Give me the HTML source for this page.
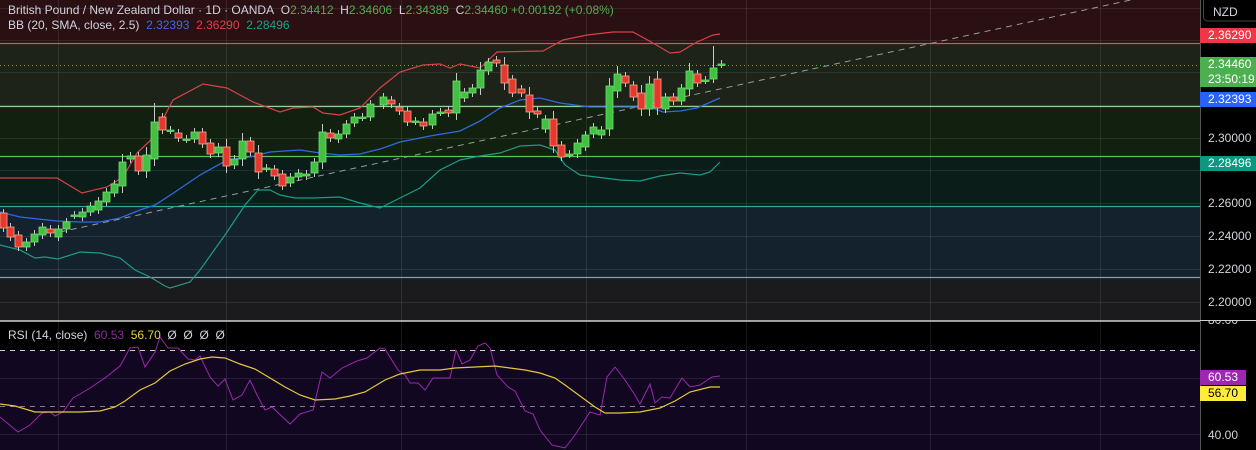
<!DOCTYPE html>
<html><head><meta charset="utf-8"><style>
html,body{margin:0;padding:0;background:#000;width:1256px;height:450px;overflow:hidden;font-family:"Liberation Sans",sans-serif}
.t{position:absolute;font-size:12px;color:#d1d4dc;white-space:nowrap}
.lb{position:absolute;left:1200px;width:56px;font-size:12px;color:#fff;padding-left:8px;box-sizing:border-box;line-height:15px}
</style></head><body>
<svg id="s" width="1256" height="450" style="position:absolute;left:0;top:0">
<rect x="0" y="0" width="1200" height="43" fill="#2a0f13"/>
<rect x="0" y="43" width="1200" height="64" fill="#1d2318"/>
<rect x="0" y="107" width="1200" height="49" fill="#122010"/>
<rect x="0" y="156" width="1200" height="50" fill="#0a1d19"/>
<rect x="0" y="206" width="1200" height="71" fill="#14222e"/>
<rect x="0" y="277" width="1200" height="44" fill="#1b1b1d"/>
<rect x="0" y="321" width="1200" height="29" fill="#000"/>
<rect x="0" y="350" width="1200" height="100" fill="#110720"/>
<g stroke="#ffffff" stroke-opacity="0.09" stroke-width="1">
<line x1="0" x2="1200" y1="8.5" y2="8.5"/><line x1="0" x2="1200" y1="40.5" y2="40.5"/><line x1="0" x2="1200" y1="72.5" y2="72.5"/><line x1="0" x2="1200" y1="105.5" y2="105.5"/><line x1="0" x2="1200" y1="138.5" y2="138.5"/><line x1="0" x2="1200" y1="170.5" y2="170.5"/><line x1="0" x2="1200" y1="203.5" y2="203.5"/><line x1="0" x2="1200" y1="236.5" y2="236.5"/><line x1="0" x2="1200" y1="269.5" y2="269.5"/><line x1="0" x2="1200" y1="302.5" y2="302.5"/>
<line x1="0" x2="1200" y1="378.5" y2="378.5"/><line x1="0" x2="1200" y1="434.5" y2="434.5"/>
<line x1="58.5" x2="58.5" y1="0" y2="450"/><line x1="226.5" x2="226.5" y1="0" y2="450"/><line x1="401.5" x2="401.5" y1="0" y2="450"/><line x1="586.5" x2="586.5" y1="0" y2="450"/><line x1="746.5" x2="746.5" y1="0" y2="450"/><line x1="930.5" x2="930.5" y1="0" y2="450"/><line x1="1100.5" x2="1100.5" y1="0" y2="450"/>
</g>
<line x1="0" x2="1200" y1="43.5" y2="43.5" stroke="#e0505a" stroke-width="1.2"/>
<line x1="0" x2="1200" y1="65.5" y2="65.5" stroke="#4caf50" stroke-dasharray="1 3"/>
<line x1="0" x2="1200" y1="106.5" y2="106.5" stroke="#8fd08f" stroke-width="1.2"/>
<line x1="0" x2="1200" y1="156.5" y2="156.5" stroke="#5fbf5f" stroke-width="1.2"/>
<line x1="0" x2="1200" y1="206.5" y2="206.5" stroke="#2aa89a" stroke-width="1.2"/>
<line x1="0" x2="1200" y1="277.5" y2="277.5" stroke="#5aa9e6" stroke-width="1.2"/>
<line x1="60" y1="232" x2="1140" y2="-2" stroke="#9a9a9a" stroke-dasharray="6 5" stroke-width="1"/>
<polyline fill="none" stroke="#d9404a" stroke-width="1.2" points="0,178 57,178 82,193 107,187 123,177 137,153 153,138 173,100 203,84 227,88 253,102 280,112 293,108 313,107 323,113 340,115 360,108 380,88 400,72 423,65 440,64 450,68 460,64 480,68 497,52 543,51 563,40 587,35 613,32 633,32 653,43 670,53 680,52 697,42 713,35 720,34"/>
<polyline fill="none" stroke="#2f6ae0" stroke-width="1.3" points="0,212 20,217 57,221 80,222 100,222 120,218 140,210 155,205 175,192 200,175 227,160 250,157 270,152 300,150 320,153 340,155 360,154 380,149 400,142 430,136 460,131 480,121 500,108 520,100 540,98 560,103 590,107 650,107 663,112 680,111 697,108 720,98"/>
<polyline fill="none" stroke="#1f9a86" stroke-width="1.2" points="0,245 20,250 35,258 45,257 58,259 80,252 100,253 120,258 135,270 150,277 165,286 170,288 190,282 200,270 225,235 245,205 258,190 270,190 280,195 295,198 313,198 340,197 360,203 380,208 400,198 420,188 440,170 460,160 480,156 500,153 520,146 540,145 555,150 565,165 580,175 620,180 640,181 660,176 680,173 700,175 710,172 720,162"/>
<g id="c"></g>
<line x1="0" x2="1200" y1="321" y2="321" stroke="#d0d0d0" stroke-width="1.5"/>
<line x1="0" x2="1200" y1="350.5" y2="350.5" stroke="#cfcfcf" stroke-dasharray="5 5"/>
<line x1="0" x2="1200" y1="406.5" y2="406.5" stroke="#8a7a9a" stroke-dasharray="5 5"/>
<polyline fill="none" stroke="#9c27b0" stroke-width="1" points="0,417 18,432 30,425 42,413 50,412 55,416 63,412 73,398 80,394 90,388 105,378 120,366 130,348 138,347 145,367 155,352 160,337 168,348 178,348 188,359 195,360 200,356 210,377 218,386 225,379 233,400 242,395 250,380 257,395 265,410 272,407 290,424 300,414 313,410 322,372 330,378 342,368 357,361 367,358 380,348 385,349 398,370 405,375 410,383 418,383 425,390 433,378 450,378 456,350 462,364 470,360 478,346 485,343 490,348 497,375 508,387 515,391 525,411 533,414 540,430 552,445 565,448 575,435 590,412 600,415 607,377 615,367 625,380 635,395 640,404 650,384 655,403 662,397 670,398 682,378 690,387 700,385 712,377 720,376"/>
<polyline fill="none" stroke="#e6c83a" stroke-width="1.2" points="0,404 15,406 35,412 50,412 80,412 100,411 115,407 125,401 140,390 155,383 170,371 185,364 200,359 212,357 225,358 240,364 255,369 270,378 285,387 300,395 315,400 335,399 350,396 365,392 385,380 400,374 420,370 440,370 455,368 475,367 495,366 510,368 525,370 540,373 555,378 565,385 580,396 595,407 605,413 620,413 640,412 660,408 675,401 690,392 710,387 720,387"/>
<rect x="1200" y="0" width="56" height="450" fill="#000"/>
<line x1="1200.5" x2="1200.5" y1="0" y2="450" stroke="#555"/>
<line x1="1200" x2="1256" y1="320.5" y2="320.5" stroke="#d0d0d0"/>
<rect x="1203.5" y="-4" width="56" height="25" rx="4" fill="#000" stroke="#444"/>
</svg>
<div class="t" style="left:8px;top:3px">British Pound / New Zealand Dollar · 1D · OANDA&nbsp; O<span style="color:#4caf50">2.34412</span>&nbsp; H<span style="color:#4caf50">2.34606</span>&nbsp; L<span style="color:#4caf50">2.34389</span>&nbsp; C<span style="color:#4caf50">2.34460</span> <span style="color:#4caf50">+0.00192 (+0.08%)</span></div>
<div class="t" style="left:8px;top:18px">BB (20, SMA, close, 2.5)&nbsp; <span style="color:#3d6be0">2.32393</span>&nbsp; <span style="color:#e0404a">2.36290</span>&nbsp; <span style="color:#1fa08a">2.28496</span></div>
<div class="t" style="left:8px;top:328px">RSI (14, close)&nbsp; <span style="color:#8e2ca0">60.53</span>&nbsp; <span style="color:#e6d23a">56.70</span>&nbsp; Ø&nbsp; Ø&nbsp; Ø&nbsp; Ø</div>
<div class="t" style="left:1213px;top:5px">NZD</div>
<div class="lb" style="top:28px;background:#f23645">2.36290</div>
<div class="lb" style="top:57px;background:#4caf50;height:30px">2.34460<br>23:50:19</div>
<div class="lb" style="top:92px;background:#2962ff">2.32393</div>
<div class="lb" style="top:156px;background:#089981">2.28496</div>
<div class="t" style="left:1208px;top:131px">2.30000</div>
<div class="t" style="left:1208px;top:196px">2.26000</div>
<div class="t" style="left:1208px;top:229px">2.24000</div>
<div class="t" style="left:1208px;top:262px">2.22000</div>
<div class="t" style="left:1208px;top:295px">2.20000</div>
<div class="t" style="left:1208px;top:313px;clip-path:inset(8px 0 0 0)">80.00</div>
<div class="lb" style="top:370px;width:46px;background:#9c27b0">60.53</div>
<div class="lb" style="top:386px;width:46px;background:#ffeb3b;color:#000">56.70</div>
<div class="t" style="left:1208px;top:428px">40.00</div>
<script>
var d=[[3,213,228],[10,227,237],[18,235,247],[26,247,242],[34,242,234],[42,235,227],[50,229,233],[58,237,229],[66,229,222],[74,215,215],[82,217,212],[90,212,206],[98,210,201],[106,202,192],[114,193,184],[122,186,162],[130,159,156],[138,156,171],[146,171,155],[154,159,122],[162,117,130],[170,130,130],[178,133,138],[186,139,139],[194,139,132],[202,132,144],[210,143,154],[218,153,147],[226,147,166],[234,165,159],[242,159,141],[250,141,152],[258,153,172],[266,168,168],[274,169,176],[282,174,186],[290,183,177],[298,177,173],[306,176,174],[314,173,162],[322,162,132],[330,133,138],[338,139,134],[346,134,124],[354,123,117],[362,117,117],[370,117,104],[383,105,97],[391,100,104],[399,107,111],[407,111,122],[415,121,121],[423,122,126],[432,125,114],[440,112,112],[448,110,113],[456,113,81],[464,98,92],[472,93,88],[480,88,70],[488,71,62],[496,60,63],[504,65,83],[512,79,93],[521,89,93],[529,95,112],[537,111,114],[545,129,119],[553,119,146],[561,145,157],[569,154,154],[577,154,143],[585,147,135],[593,134,127],[601,135,130],[609,129,86],[617,91,74],[625,76,83],[633,85,97],[641,93,109],[649,109,84],[657,79,108],[665,109,97],[673,97,101],[681,101,88],[689,89,71],[697,74,83],[705,80,80],[713,79,68],[721,64,64]];
var s='';d.forEach(function(c){var x=c[0],o=c[1],cl=c[2],t=Math.min(o,cl),b=Math.max(o,cl),g=cl<=o;var h=b-t;var up=g?'#43c043':'#e5392f',br=g?'#6ee06e':'#f7a58a';var wt=t-4-(h>15?4:0),wb=b+4+(h>15?3:0);if(x==154)wt=103;if(x==713)wt=46;
s+='<line x1="'+(x+.5)+'" x2="'+(x+.5)+'" y1="'+wt+'" y2="'+wb+'" stroke="#c8c8c8" stroke-width="1"/>';
s+='<rect x="'+(x-3)+'" y="'+t+'" width="7" height="'+Math.max(h,1.5)+'" fill="'+up+'" stroke="'+br+'" stroke-width="0.8"/>';});
document.getElementById('c').innerHTML=s;
</script>
</body></html>
